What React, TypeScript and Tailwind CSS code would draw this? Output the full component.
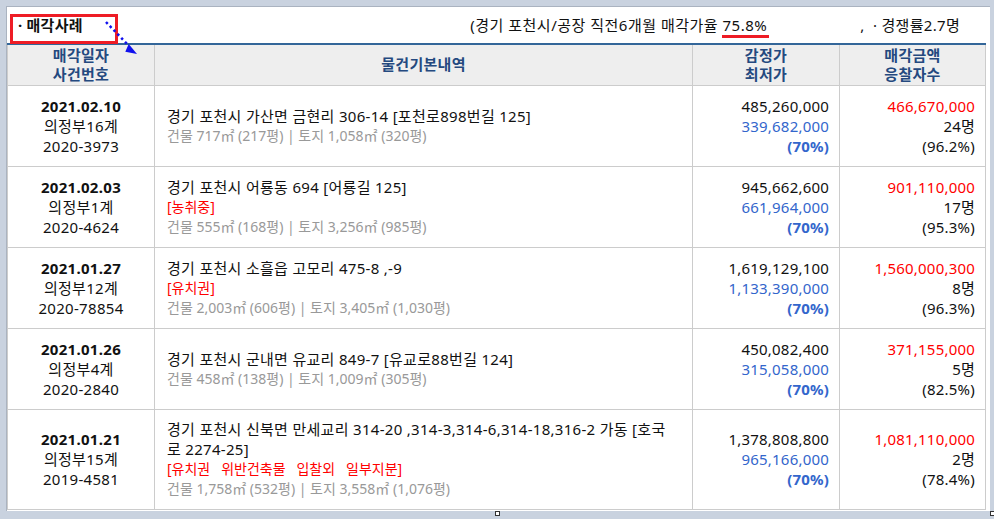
import React from 'react';

type Sale = {
  date: string;
  court: string;
  caseNo: string;
  address: string;
  tags?: string;
  area: string;
  appraisal: string;
  minimum: string;
  rate: string;
  price: string;
  bidders: string;
  ratio: string;
};

const sales: Sale[] = [
  {
    date: '2021.02.10',
    court: '의정부16계',
    caseNo: '2020-3973',
    address: '경기 포천시 가산면 금현리 306-14 [포천로898번길 125]',
    area: '건물 717㎡ (217평) | 토지 1,058㎡ (320평)',
    appraisal: '485,260,000',
    minimum: '339,682,000',
    rate: '(70%)',
    price: '466,670,000',
    bidders: '24명',
    ratio: '(96.2%)',
  },
  {
    date: '2021.02.03',
    court: '의정부1계',
    caseNo: '2020-4624',
    address: '경기 포천시 어룡동 694 [어룡길 125]',
    tags: '[농취중]',
    area: '건물 555㎡ (168평) | 토지 3,256㎡ (985평)',
    appraisal: '945,662,600',
    minimum: '661,964,000',
    rate: '(70%)',
    price: '901,110,000',
    bidders: '17명',
    ratio: '(95.3%)',
  },
  {
    date: '2021.01.27',
    court: '의정부12계',
    caseNo: '2020-78854',
    address: '경기 포천시 소흘읍 고모리 475-8 ,-9',
    tags: '[유치권]',
    area: '건물 2,003㎡ (606평) | 토지 3,405㎡ (1,030평)',
    appraisal: '1,619,129,100',
    minimum: '1,133,390,000',
    rate: '(70%)',
    price: '1,560,000,300',
    bidders: '8명',
    ratio: '(96.3%)',
  },
  {
    date: '2021.01.26',
    court: '의정부4계',
    caseNo: '2020-2840',
    address: '경기 포천시 군내면 유교리 849-7 [유교로88번길 124]',
    area: '건물 458㎡ (138평) | 토지 1,009㎡ (305평)',
    appraisal: '450,082,400',
    minimum: '315,058,000',
    rate: '(70%)',
    price: '371,155,000',
    bidders: '5명',
    ratio: '(82.5%)',
  },
  {
    date: '2021.01.21',
    court: '의정부15계',
    caseNo: '2019-4581',
    address: '경기 포천시 신북면 만세교리 314-20 ,314-3,314-6,314-18,316-2 가동 [호국로 2274-25]',
    tags: '[유치권\u00a0\u00a0\u00a0위반건축물\u00a0\u00a0\u00a0입찰외\u00a0\u00a0\u00a0일부지분]',
    area: '건물 1,758㎡ (532평) | 토지 3,558㎡ (1,076평)',
    appraisal: '1,378,808,800',
    minimum: '965,166,000',
    rate: '(70%)',
    price: '1,081,110,000',
    bidders: '2명',
    ratio: '(78.4%)',
  },
];

const App: React.FC = () => {
  return (
    <div
      className="relative w-[994px] h-[519px] overflow-hidden bg-[#c9d2df] pt-[6px] pl-[6px]"
      style={{ fontFamily: '"Noto Sans", "Noto Sans CJK KR", sans-serif' }}
    >
      {/* ── Panel ── */}
      <div className="w-[984px] h-[505px] bg-white border-t border-l border-[#aab3c0] text-[15px] tracking-[0.3px] text-[#111]">
        {/* Title bar */}
        <div className="relative h-[36px] flex items-center">
          <div className="absolute left-[3px] top-[7px] w-[108px] h-[30px] border-[3px] border-[#ee1c25]" />
          <div className="pl-[11px] font-bold flex items-center gap-[4px]">
            <span>·</span>
            <span>매각사례</span>
          </div>
          <div className="ml-auto flex items-center pr-[30px]">
            <span className="tracking-[0.5px]">
              (경기 포천시/공장 직전6개월 매각가율{' '}
              <span className="relative">
                75.8%
                <span className="absolute left-[-1px] right-[-2px] top-[20px] h-[3px] bg-[#ee1c25]" />
              </span>
            </span>
            <span className="ml-[93px]">,&nbsp;&nbsp;· 경쟁률2.7명</span>
          </div>
          {/* Arrow annotation */}
          <svg className="absolute left-[96px] top-[12px]" width="40" height="40" viewBox="0 0 40 40">
            <line x1="3" y1="3" x2="25" y2="26" stroke="#1010ee" strokeWidth="2.5" strokeDasharray="2.5 3" />
            <polygon points="25.7,25 22.3,32.7 34,35" fill="#1010ee" />
          </svg>
        </div>

        {/* Table */}
        <table className="w-[978px] table-fixed border-collapse">
          <colgroup>
            <col className="w-[147px]" />
            <col className="w-[538px]" />
            <col className="w-[147px]" />
            <col className="w-[146px]" />
          </colgroup>
          <thead>
            <tr className="border-t-[2px] border-[#336699] bg-[#eeeeee] text-[#24497f] leading-[19px]">
              <th className="h-[41px] border border-t-0 border-[#cccccc] font-bold">
                매각일자
                <br />
                사건번호
              </th>
              <th className="border border-t-0 border-[#cccccc] font-bold">물건기본내역</th>
              <th className="border border-t-0 border-[#cccccc] font-bold">
                감정가
                <br />
                최저가
              </th>
              <th className="border border-t-0 border-[#cccccc] font-bold">
                매각금액
                <br />
                응찰자수
              </th>
            </tr>
          </thead>
          <tbody className="leading-[20px]">
            {sales.map((s, i) => (
              <tr key={s.caseNo}>
                <td className={`border border-[#cccccc] text-center ${i === 4 ? 'h-[100px]' : 'h-[81px]'}`}>
                  <div className="font-bold">{s.date}</div>
                  <div>{s.court}</div>
                  <div>{s.caseNo}</div>
                </td>
                <td className="border border-[#cccccc] pl-[12px] pr-[20px]">
                  <div>{s.address}</div>
                  {s.tags && <div className="text-[14px] tracking-normal text-[#ff0000]">{s.tags}</div>}
                  <div className="text-[14px] tracking-normal text-[#999999]">{s.area}</div>
                </td>
                <td className="border border-[#cccccc] text-right pr-[10px] tracking-[0.2px]">
                  <div>{s.appraisal}</div>
                  <div className="text-[#3366cc]">{s.minimum}</div>
                  <div className="text-[#3366cc] font-bold">{s.rate}</div>
                </td>
                <td className="border border-[#cccccc] text-right pr-[10px] tracking-[0.2px]">
                  <div className="text-[#ff0000]">{s.price}</div>
                  <div>{s.bidders}</div>
                  <div>{s.ratio}</div>
                </td>
              </tr>
            ))}
          </tbody>
        </table>
      </div>

      {/* resize handles */}
      <div className="absolute left-[495px] top-[511px] w-[5px] h-[5px] bg-white border border-[#333]" />
      <div className="absolute left-[990px] top-[511px] w-[5px] h-[5px] bg-white border border-[#333]" />
    </div>
  );
};

export default App;
